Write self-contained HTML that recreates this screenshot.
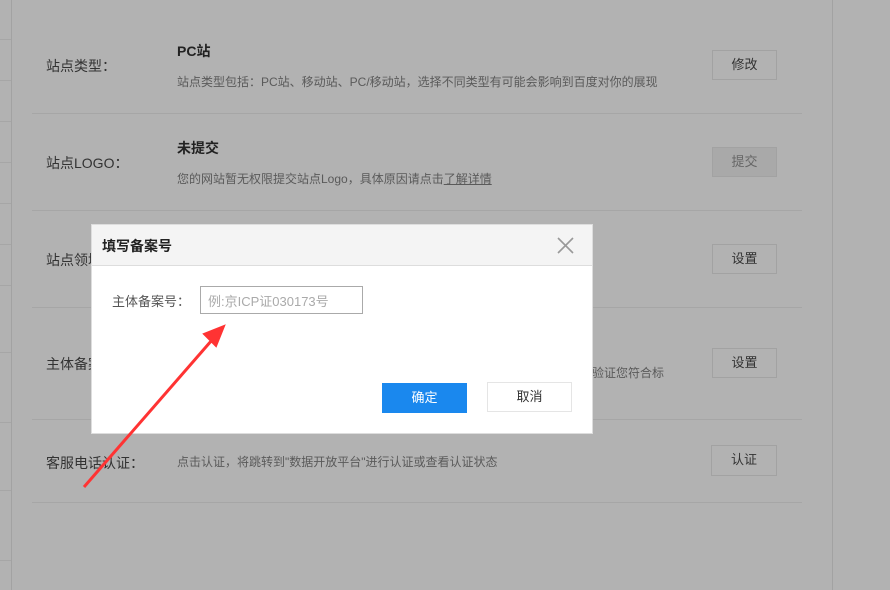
<!DOCTYPE html>
<html><head><meta charset="utf-8"><style>
*{margin:0;padding:0;box-sizing:border-box}
body{width:890px;height:590px;background:#b2b2b2;position:relative;overflow:hidden;font-family:"Liberation Sans","Noto Sans CJK SC",sans-serif;font-size:13px;color:#333}
.a{position:absolute;white-space:nowrap}
.hl{position:absolute;height:1px;background:#a6a6a6}
.btn{position:absolute;width:65px;height:30px;border:1px solid #a2a2a2;text-align:center;line-height:28px;font-size:13px;color:#333}
.lab{font-size:14px;color:#333}
.desc{font-size:12px;color:#5a5a5a}
</style></head><body>
<div style="position:absolute;left:11px;top:0;width:1px;height:590px;background:#a2a2a2"></div>
<div style="position:absolute;left:832px;top:0;width:1px;height:590px;background:#a2a2a2"></div>
<div class="hl" style="left:0;width:11px;top:39px"></div>
<div class="hl" style="left:0;width:11px;top:80px"></div>
<div class="hl" style="left:0;width:11px;top:121px"></div>
<div class="hl" style="left:0;width:11px;top:162px"></div>
<div class="hl" style="left:0;width:11px;top:203px"></div>
<div class="hl" style="left:0;width:11px;top:244px"></div>
<div class="hl" style="left:0;width:11px;top:285px"></div>
<div class="hl" style="left:0;width:11px;top:352px"></div>
<div class="hl" style="left:0;width:11px;top:422px"></div>
<div class="hl" style="left:0;width:11px;top:490px"></div>
<div class="hl" style="left:0;width:11px;top:560px"></div>

<div class="hl" style="left:32px;width:770px;top:113px"></div>
<div class="hl" style="left:32px;width:770px;top:210px"></div>
<div class="hl" style="left:32px;width:770px;top:307px"></div>
<div class="hl" style="left:32px;width:770px;top:419px"></div>
<div class="hl" style="left:32px;width:770px;top:502px"></div>

<div class="a lab" style="left:46px;top:56px">站点类型：</div>
<div class="a" style="left:177px;top:41px;font-size:14px;font-weight:bold;color:#222">PC站</div>
<div class="a desc" style="left:177px;top:73px">站点类型包括：PC站、移动站、PC/移动站，选择不同类型有可能会影响到百度对你的展现</div>
<div class="btn" style="left:712px;top:50px">修改</div>

<div class="a lab" style="left:46px;top:153px">站点LOGO：</div>
<div class="a" style="left:177px;top:138px;font-size:14px;font-weight:bold;color:#222">未提交</div>
<div class="a desc" style="left:177px;top:170px">您的网站暂无权限提交站点Logo，具体原因请点击<span style="text-decoration:underline">了解详情</span></div>
<div class="btn" style="left:712px;top:147px;background:#a9a9a9;color:#666">提交</div>

<div class="a lab" style="left:46px;top:250px">站点领域：</div>
<div class="btn" style="left:712px;top:244px">设置</div>

<div class="a lab" style="left:46px;top:354px">主体备案：</div>
<div class="a desc" style="left:592px;top:364px">验证您符合标</div>
<div class="btn" style="left:712px;top:348px">设置</div>

<div class="a lab" style="left:46px;top:453px">客服电话认证：</div>
<div class="a desc" style="left:177px;top:453px">点击认证，将跳转到"数据开放平台"进行认证或查看认证状态</div>
<div class="btn" style="left:711px;top:445px;width:66px;height:31px">认证</div>

<div style="position:absolute;left:91px;top:224px;width:502px;height:210px;background:#fff;border:1px solid #ddd">
 <div style="height:41px;background:#f4f4f4;border-bottom:1px solid #ddd;position:relative">
  <div class="a" style="left:10px;top:11px;font-size:14px;font-weight:bold;color:#222">填写备案号</div>
  <svg style="position:absolute;left:465px;top:12px" width="17" height="17" viewBox="0 0 17 17"><path d="M1 1L16 16M16 1L1 16" stroke="#999" stroke-width="1.6"/></svg>
 </div>
 <div class="a" style="left:20px;top:66px;font-size:13px;color:#555">主体备案号：</div>
 <div style="position:absolute;left:108px;top:61px;width:163px;height:28px;border:1px solid #aaa"></div>
 <div class="a" style="left:116px;top:66px;font-size:13px;color:#aaa">例:京ICP证030173号</div>
 <div style="position:absolute;left:290px;top:158px;width:85px;height:30px;background:#1a88ee;color:#fff;text-align:center;line-height:30px;font-size:13px">确定</div>
 <div style="position:absolute;left:395px;top:157px;width:85px;height:30px;border:1px solid #e5e5e5;color:#333;text-align:center;line-height:28px;font-size:13px">取消</div>
</div>

<svg style="position:absolute;left:0;top:0" width="890" height="590">
 <path d="M84 487L212 340" stroke="#f33" stroke-width="3"/>
 <path d="M224 326L204 334L216 346Z" fill="#f33" stroke="#f33" stroke-width="2"/>
</svg>
</body></html>
